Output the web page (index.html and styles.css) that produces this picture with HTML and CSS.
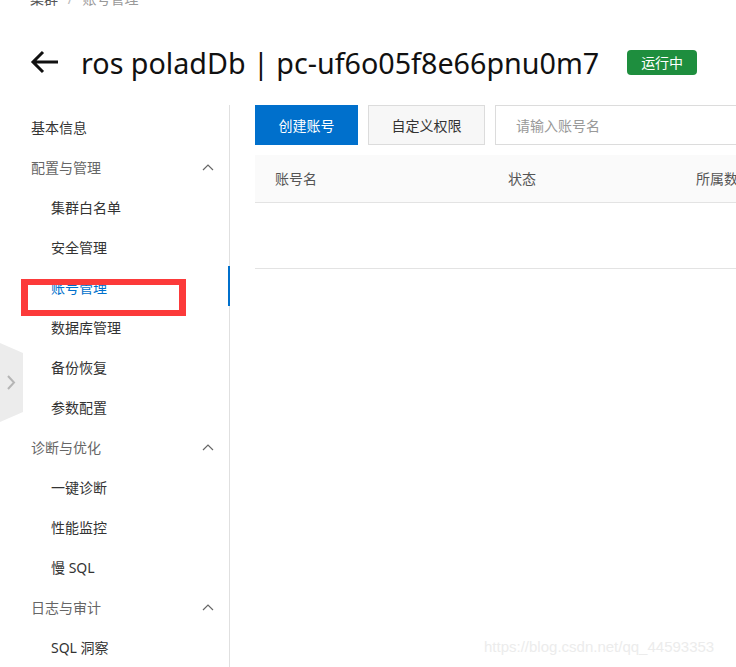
FILE: index.html
```html
<!DOCTYPE html>
<html lang="zh-CN">
<head>
  <meta charset="UTF-8" />
  <title>账号管理</title>
  <link rel="stylesheet" href="styles.css">
</head>
<body>

  <div class="page-head">
    <div class="breadcrumb">
      <span class="crumb-root">集群</span>
      <span class="crumb-sep">/</span>
      <span class="crumb-current">账号管理</span>
    </div>
    <div class="title-row">
      <svg class="back-icon" width="30" height="24" viewBox="0 0 30 24">
        <path d="M28 12 H3 M13 2 L3 12 L13 22" fill="none" stroke="#111" stroke-width="3"/>
      </svg>
      <h1 class="page-title">ros poladDb | pc-uf6o05f8e66pnu0m7</h1>
      <span class="status-tag">运行中</span>
    </div>
  </div>

  <div class="layout">
    <div class="side-nav">
      <div class="nav-item top">基本信息</div>

      <div class="nav-group">配置与管理
        <svg class="chev" width="12" height="8" viewBox="0 0 12 8"><path d="M1 7 L6 2 L11 7" fill="none" stroke="#666" stroke-width="1.2"/></svg>
      </div>
      <div class="nav-item sub">集群白名单</div>
      <div class="nav-item sub">安全管理</div>
      <div class="nav-item sub active">账号管理</div>
      <div class="nav-item sub">数据库管理</div>
      <div class="nav-item sub">备份恢复</div>
      <div class="nav-item sub">参数配置</div>

      <div class="nav-group">诊断与优化
        <svg class="chev" width="12" height="8" viewBox="0 0 12 8"><path d="M1 7 L6 2 L11 7" fill="none" stroke="#666" stroke-width="1.2"/></svg>
      </div>
      <div class="nav-item sub">一键诊断</div>
      <div class="nav-item sub">性能监控</div>
      <div class="nav-item sub">慢 SQL</div>

      <div class="nav-group">日志与审计
        <svg class="chev" width="12" height="8" viewBox="0 0 12 8"><path d="M1 7 L6 2 L11 7" fill="none" stroke="#666" stroke-width="1.2"/></svg>
      </div>
      <div class="nav-item sub">SQL 洞察</div>

      <!-- annotation box from the screenshot -->
      <div class="mark-box"></div>
    </div>

    <div class="main">
      <div class="toolbar">
        <button class="btn primary">创建账号</button>
        <button class="btn">自定义权限</button>
        <input class="search" type="text" placeholder="请输入账号名">
      </div>

      <div class="table">
        <div class="table-head">
          <div class="col col-name">账号名</div>
          <div class="col col-status">状态</div>
          <div class="col col-db">所属数据库</div>
        </div>
        <div class="table-empty"></div>
      </div>
    </div>
  </div>

  <div class="collapse-tab">
    <svg width="24" height="80" viewBox="0 0 24 80">
      <path d="M0 0 L23 10 L23 69 L0 79 Z" fill="#ececec"/>
      <path d="M8 33 L14 39.5 L8 46" fill="none" stroke="#b5b5b5" stroke-width="2"/>
    </svg>
  </div>

  <div class="watermark">https://blog.csdn.net/qq_44593353</div>

</body>
</html>
```

FILE: styles.css
```css
:root {
  --blue: #0070cc;
  --line: #e3e3e3;
  --text: #333;
  --muted: #666;
}

* {
  box-sizing: border-box;
}

body {
  margin: 0;
  font-family: 'Noto Sans', 'Noto Sans CJK SC', sans-serif;
  color: var(--text);
  background: #fff;
  overflow: hidden;
  height: 667px;
  position: relative;
}

.page-head {
  padding-left: 30px;
}

.breadcrumb {
  font-size: 14px;
  line-height: 20px;
  margin-top: -11px;
  height: 20px;
  color: #999;
}

.crumb-root {
  color: #555;
}

.crumb-sep {
  margin: 0 6px;
  color: #bbb;
}

.title-row {
  display: flex;
  align-items: center;
  height: 40px;
  margin-top: 33px;
}

.back-icon {
  margin-right: 21px;
}

.page-title {
  margin: 0;
  font-size: 28.7px;
  font-weight: normal;
  color: #111;
  white-space: nowrap;
}

.status-tag {
  margin-left: 28px;
  background: #1e8e3e;
  color: #fff;
  font-size: 14px;
  line-height: 25px;
  padding: 0 14px;
  border-radius: 4px;
}

.layout {
  display: flex;
  margin-top: 23px;
}

.side-nav {
  position: relative;
  width: 230px;
  flex-shrink: 0;
  border-right: 1px solid #e0e0e0;
  padding-top: 3px;
  height: 562px;
}

.nav-item,
.nav-group {
  height: 40px;
  line-height: 40px;
  font-size: 14px;
  position: relative;
}

.nav-item.top {
  padding-left: 31px;
  color: var(--text);
}

.nav-group {
  padding-left: 31px;
  color: var(--muted);
}

.nav-group .chev {
  position: absolute;
  right: 15px;
  top: 15px;
}

.nav-item.sub {
  padding-left: 51px;
  color: var(--text);
}

.nav-item.active {
  color: var(--blue);
}

.nav-item.active::after {
  content: "";
  position: absolute;
  right: -1px;
  top: -2px;
  width: 2px;
  height: 40px;
  background: var(--blue);
}

.mark-box {
  position: absolute;
  left: 21px;
  top: 174px;
  width: 165px;
  height: 37px;
  border: 6px solid #fc3a3a;
  border-left-width: 7px;
  border-right-width: 7px;
}

.main {
  flex: 1;
  padding-left: 25px;
  min-width: 0;
  overflow: hidden;
}

.toolbar {
  display: flex;
  height: 40px;
}

.btn {
  flex-shrink: 0;
  white-space: nowrap;
  height: 40px;
  font-family: inherit;
  font-size: 14px;
  border: 1px solid #dcdcdc;
  background: #f7f7f7;
  color: var(--text);
  margin-right: 10px;
  cursor: pointer;
}

.btn.primary {
  width: 103px;
  background: var(--blue);
  border-color: var(--blue);
  color: #fff;
}

.btn:not(.primary) {
  width: 117px;
}

.search {
  flex-shrink: 0;
  width: 300px;
  height: 40px;
  border: 1px solid #dcdcdc;
  padding: 0 20px;
  font-family: inherit;
  font-size: 14px;
}

.search::placeholder {
  color: #999;
}

.table {
  margin-top: 10px;
  overflow: hidden;
}

.table-head {
  display: flex;
  height: 48px;
  line-height: 47px;
  background: #fafafa;
  border-bottom: 1px solid var(--line);
  font-size: 14px;
  color: #555;
  white-space: nowrap;
}

.col {
  flex-shrink: 0;
}

.col-name {
  padding-left: 20px;
  width: 253px;
}

.col-status {
  width: 188px;
}

.table-empty {
  height: 66px;
  border-bottom: 1px solid var(--line);
}

.collapse-tab {
  position: absolute;
  left: 0;
  top: 343px;
  line-height: 0;
}

.watermark {
  position: absolute;
  left: 484px;
  top: 638px;
  font-family: 'Liberation Sans', sans-serif;
  font-size: 15px;
  color: #ececec;
}
```
